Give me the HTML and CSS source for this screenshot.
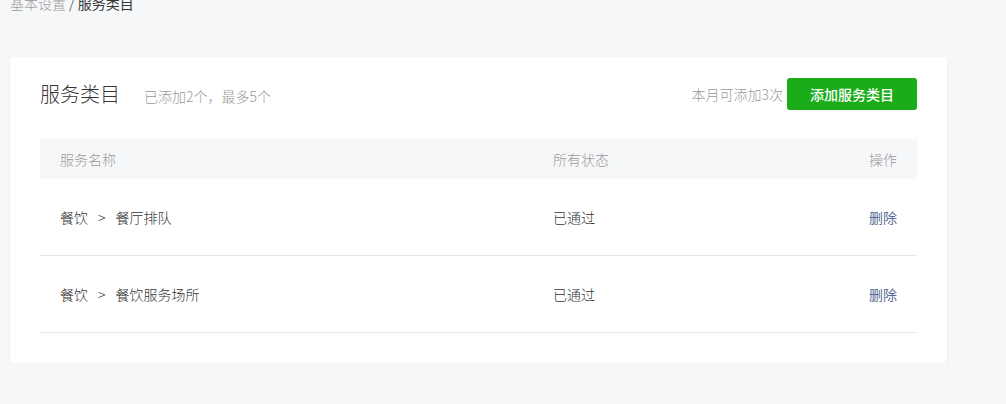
FILE: index.html
```html
<!DOCTYPE html>
<html lang="zh-CN">
<head>
<meta charset="utf-8">
<title>服务类目</title>
<link rel="stylesheet" href="styles.css">
</head>
<body>
<div class="page">
  <div class="crumb"><span class="crumb-parent">基本设置</span> / <span class="crumb-current">服务类目</span></div>
  <div class="card">
    <div class="card-head">
      <div class="head-left">
        <h2 class="title">服务类目</h2>
        <span class="sub">已添加2个，最多5个</span>
      </div>
      <div class="head-right">
        <span class="quota">本月可添加3次</span>
        <button class="btn-primary">添加服务类目</button>
      </div>
    </div>
    <div class="table">
      <div class="row row-head">
        <div class="cell">服务名称</div>
        <div class="cell">所有状态</div>
        <div class="cell cell-op">操作</div>
      </div>
      <div class="row row-body">
        <div class="cell">餐饮<span class="sep">&gt;</span>餐厅排队</div>
        <div class="cell">已通过</div>
        <div class="cell cell-op"><a class="link" href="#">删除</a></div>
      </div>
      <div class="row row-body">
        <div class="cell">餐饮<span class="sep">&gt;</span>餐饮服务场所</div>
        <div class="cell">已通过</div>
        <div class="cell cell-op"><a class="link" href="#">删除</a></div>
      </div>
    </div>
  </div>
</div>
</body>
</html>
```
FILE: styles.css
```css
html, body {
  margin: 0;
  padding: 0;
  background: #f6f7f9;
  font-family: "Noto Sans CJK SC", "Noto Sans", sans-serif;
  font-size: 14px;
  color: #353535;
}
.page {
  padding: 0 59px 0 10px;
  margin-top: -7px;
}
.crumb {
  line-height: 20px;
  color: #353535;
  font-weight: 300;
}
.crumb-parent {
  color: #9a9a9a;
}
.crumb-current {
  font-weight: 400;
}
.card {
  margin-top: 44px;
  width: 937px;
  box-sizing: border-box;
  background: #fff;
  border-radius: 4px;
  box-shadow: 0 1px 2px rgba(0, 0, 0, 0.08);
  padding: 21px 30px 30px;
}
.card-head {
  display: flex;
  justify-content: space-between;
  align-items: center;
  height: 32px;
  margin-bottom: 29px;
}
.head-left {
  display: flex;
  align-items: center;
}
.title {
  margin: 0;
  font-size: 20px;
  font-weight: 300;
  color: #353535;
  line-height: 28px;
}
.sub {
  margin-left: 24px;
  color: #9a9a9a;
  padding-top: 3px;
  font-weight: 300;
}
.head-right {
  display: flex;
  align-items: center;
  gap: 4px;
}
.quota {
  color: #9a9a9a;
  font-weight: 300;
}
.btn-primary {
  width: 130px;
  height: 32px;
  border: 0;
  border-radius: 3px;
  background: #1aad19;
  color: #fff;
  font-family: inherit;
  font-size: 14px;
  font-weight: 500;
  padding: 0;
}
.table {
  display: flex;
  flex-direction: column;
}
.row {
  display: grid;
  grid-template-columns: 493px 1fr auto;
  align-items: center;
  padding: 0 20px;
  font-weight: 300;
}
.row-head {
  height: 40px;
  background: #f6f7f9;
  color: #9a9a9a;
}
.row-body {
  height: 76px;
  border-bottom: 1px solid #e7e7eb;
  color: #353535;
}
.sep {
  margin: 0 10px;
}
.cell-op {
  text-align: right;
}
.link {
  color: #576b95;
  text-decoration: none;
  font-weight: 400;
}
```
